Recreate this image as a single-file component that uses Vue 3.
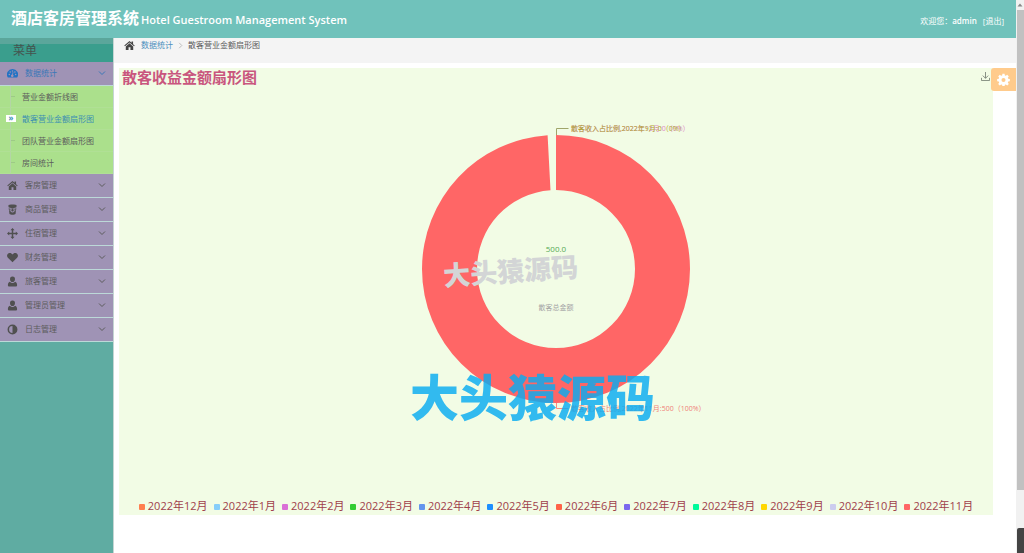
<script setup>
import { ref } from 'vue'

const subItems = ['营业金额折线图', '散客营业金额扇形图', '团队营业金额扇形图', '房间统计']
const activeSub = ref(1)

const menus = [
  { icon: 'home', label: '客房管理' },
  { icon: 'cup', label: '商品管理' },
  { icon: 'move', label: '住宿管理' },
  { icon: 'heart', label: '财务管理' },
  { icon: 'user', label: '旅客管理' },
  { icon: 'user', label: '管理员管理' },
  { icon: 'adjust', label: '日志管理' }
]

const icons = {
  home: 'M8 1.6 0.4 8l1 1.2L8 3.7l6.6 5.5 1-1.2-2.4-2V2h-2.2v2.1zM8 4.9 2.6 9.4V14.4h4V10.4h2.8v4h4V9.4z',
  cup: 'M2 2.2C2 .4 14 .4 14 2.2l-.3 2.600C13 6.200 3 6.200 2.300 4.800zM2.400 6c2 1.300 9.200 1.300 11.200 0l-.3 2.200h-2.200a3.200 3.200 0 0 0-6.200 0H2.700zM2.900 9.200h1.900a3.200 3.200 0 0 0 6.400 0h1.900l-.7 5.200c-1.500 1.500-7.300 1.500-8.800 0zM8 7.200a1.800 1.800 0 1 1 0 3.600 1.800 1.800 0 0 1 0-3.600z',
  move: 'M8 0l3 3.200H9.100v3.700h3.700V5L16 8l-3.200 3V9.100H9.100v3.700H11L8 16l-3-3.200h1.900V9.100H3.200V11L0 8l3.200-3v1.900h3.700V3.200H5z',
  heart: 'M8 15 1.300 8.500C-.6 6.500-.2 3.300 1.800 2 4 .6 6.800 1.400 8 3.600 9.200 1.400 12 .6 14.200 2c2 1.300 2.400 4.500.5 6.500z',
  user: 'M8 .8a3.600 3.600 0 0 1 3.600 3.800C11.600 7 10 8.900 8 8.900S4.400 7 4.400 4.600A3.600 3.600 0 0 1 8 .8zM4.200 8.200C5.300 9.400 6.600 10 8 10s2.700-.6 3.800-1.800c2 .6 2.900 2.700 2.900 5.200 0 1.200-.9 2-2 2H3.300c-1.100 0-2-.8-2-2 0-2.500.9-4.600 2.900-5.200z',
  adjust: 'M8 .8a7.200 7.200 0 1 1 0 14.400A7.200 7.200 0 0 1 8 .8zM8 3v10A5 5 0 0 1 8 3z'
}

const legend = [
  { name: '2022年12月', color: '#ff7f50' },
  { name: '2022年1月', color: '#87cefa' },
  { name: '2022年2月', color: '#da70d6' },
  { name: '2022年3月', color: '#32cd32' },
  { name: '2022年4月', color: '#6495ed' },
  { name: '2022年5月', color: '#1e90ff' },
  { name: '2022年6月', color: '#ff6347' },
  { name: '2022年7月', color: '#7b68ee' },
  { name: '2022年8月', color: '#00fa9a' },
  { name: '2022年9月', color: '#ffd700' },
  { name: '2022年10月', color: '#ccccee' },
  { name: '2022年11月', color: '#ff6666' }
]
</script>

<template>
  <div class="window">
    <div class="page">
      <header class="topbar">
        <h1><span>酒店客房管理系统</span><small>Hotel Guestroom Management System</small></h1>
        <div class="account">
          <span>欢迎您：</span><b>admin</b><a href="#">[退出]</a>
        </div>
      </header>

      <div class="body">
        <nav class="sidebar">
          <div class="menu-title">菜单</div>
          <button class="menu open" type="button">
            <svg class="icon" viewBox="0 0 16 16">
              <path d="M8 1.500a8 8 0 0 0-6.800 12.300h13.600A8 8 0 0 0 8 1.500z" />
              <g fill="#9f93b5">
                <circle cx="3.400" cy="9.500" r="1.100" />
                <circle cx="4.700" cy="5.900" r="1.100" />
                <circle cx="8" cy="4.400" r="1.100" />
                <circle cx="12.600" cy="9.500" r="1.100" />
                <circle cx="11.500" cy="5.900" r="1.100" />
                <path d="M9.300 6l-.6 3.700a1.900 1.900 0 1 1-1.200-.3L8.300 5.800z" />
              </g>
            </svg>
            <span>数据统计</span>
            <svg class="chevron" viewBox="0 0 8 8"><path d="M1 2.500l3 3 3-3" /></svg>
          </button>
          <ul class="submenu">
            <li v-for="(item, i) in subItems" :key="item" :class="{ active: i === activeSub }">
              <span class="mark">{{ i === activeSub ? '»' : '' }}</span>
              <a href="#" @click.prevent="activeSub = i">{{ item }}</a>
            </li>
          </ul>
          <button v-for="m in menus" :key="m.label" class="menu" type="button">
            <svg class="icon" viewBox="0 0 16 16"><path :d="icons[m.icon]" fill-rule="evenodd" /></svg>
            <span>{{ m.label }}</span>
            <svg class="chevron" viewBox="0 0 8 8"><path d="M1 2.500l3 3 3-3" /></svg>
          </button>
        </nav>

        <main class="content">
          <div class="crumbs">
            <svg class="crumb-home" viewBox="0 0 16 16"><path :d="icons.home" /></svg>
            <a href="#">数据统计</a>
            <svg class="sep" viewBox="0 0 8 8"><path d="M2.500 1l3 3-3 3" /></svg>
            <span>散客营业金额扇形图</span>
          </div>

          <section class="chart">
            <h2>散客收益金额扇形图</h2>
            <button class="save" type="button" aria-label="保存为图片">
              <svg viewBox="0 0 10 10"><path d="M5 0v7M2 4l3 3 3-3M.5 6.500v3h9v-3" /></svg>
            </button>
            <svg class="plot" viewBox="0 0 874 429">
              <path
                fill="#ff6666"
                d="M437 67A134 134 0 0 1 437 335A134 134 0 0 1 303 201A134 134 0 0 1 428.600 67.300L431.500 122.200A79 79 0 0 0 358 201A79 79 0 0 0 437 280A79 79 0 0 0 437 122z"
              />
              <path class="lead top" d="M437.500 67v-6.500h12" />
              <g class="label">
                <text x="452" y="63" fill="#dd88c8">散客收入占比例,2022年12月:0（0%）</text>
                <text x="452" y="63" fill="#b0aa30">散客收入占比例,2022年9月:0（0%）</text>
              </g>
              <text class="total" x="437" y="184">500.0</text>
              <text class="caption" x="437" y="242">散客总金额</text>
              <path class="lead bottom" d="M437.500 335v5.500h12" />
              <text class="label" x="452" y="343" fill="#f07f78">散客收入占比例,2022年11月:500（100%）</text>
              <text class="brand pale" x="325" y="218" transform="rotate(-4 325 218)">大头猿源码</text>
              <text class="brand vivid" x="291" y="348">大头猿源码</text>
            </svg>
            <div class="legend">
              <button v-for="l in legend" :key="l.name" type="button">
                <i :style="{ background: l.color }"></i>{{ l.name }}
              </button>
            </div>
          </section>

          <button class="settings" type="button" aria-label="设置">
            <svg viewBox="0 0 16 16">
              <path
                fill-rule="evenodd"
                d="M6.700 1h2.600l.4 2 1.200.5 1.700-1.200 1.900 1.900-1.200 1.700.5 1.200 2 .4v2.600l-2 .4-.5 1.200 1.200 1.700-1.900 1.900-1.700-1.200-1.200.5-.4 2H6.700l-.4-2-1.200-.5-1.700 1.200-1.900-1.900 1.200-1.700-.5-1.200-2-.4V7.500l2-.4.5-1.200-1.200-1.700 1.900-1.900 1.700 1.200 1.200-.5zM8 6.100a2.500 2.500 0 1 0 0 5 2.500 2.500 0 0 0 0-5z"
              />
            </svg>
          </button>
        </main>
      </div>
    </div>

    <div class="scrollbar" aria-hidden="true">
      <svg viewBox="0 0 8 10"><path d="M4 3.500l2.500 3h-5z" /></svg>
      <div class="thumb"></div>
      <div class="widget"></div>
    </div>
  </div>
</template>

<style>
body {
  margin: 0;
  background: #fff;
}
</style>

<style scoped>
.window {
  display: flex;
  min-height: 100vh;
  font: 8px/12px 'Open Sans', 'Noto Sans CJK SC', sans-serif;
  color: #5c5c5c;
}
.page {
  flex: 1;
  min-width: 0;
  display: flex;
  flex-direction: column;
}
button {
  border: 0;
  padding: 0;
  margin: 0;
  background: none;
  font: inherit;
  color: inherit;
  cursor: pointer;
}
a {
  color: inherit;
  text-decoration: none;
}

.topbar {
  display: flex;
  align-items: center;
  justify-content: space-between;
  height: 38px;
  padding: 0 12px 0 11px;
  background: #70c2bb;
  color: #fff;
}
h1 {
  display: flex;
  align-items: baseline;
  gap: 2px;
  margin: 0;
  font-size: 16px;
  line-height: 24px;
  font-weight: 700;
}
small {
  font-size: 11px;
  font-weight: 600;
}
.account {
  display: flex;
  padding-top: 3px;
}
.account b {
  font-weight: 600;
  margin-right: 6px;
}

.body {
  flex: 1;
  display: flex;
}
.sidebar {
  flex: none;
  width: 113px;
  border-right: 1px solid #c5d5d3;
  background: #5faca2;
}
.menu-title {
  box-sizing: border-box;
  height: 24px;
  padding-left: 13px;
  border-top: 6px solid #5ba69b;
  background: #3a9e8d;
  font-size: 12px;
  line-height: 14px;
  color: #45534f;
}
.menu {
  box-sizing: border-box;
  display: flex;
  align-items: center;
  width: 100%;
  height: 24px;
  padding: 0 7px 2px;
  border-bottom: 1px solid #bcd9d8;
  background: #9f93b5;
  text-align: left;
}
.menu.open {
  color: #3a78b8;
}
.icon {
  width: 11px;
  height: 11px;
  margin: 2px 7px 0 0;
  fill: #505050;
}
.open .icon {
  fill: #2273c4;
}
.chevron {
  width: 8px;
  height: 8px;
  margin-left: auto;
  fill: none;
  stroke: currentColor;
}
.submenu {
  margin: 0;
  padding: 0;
  list-style: none;
  background: linear-gradient(#b4d5a6, #b4d5a6) 10px 0 / 1px 100% no-repeat #abe08c;
}
.submenu li {
  box-sizing: border-box;
  display: flex;
  align-items: center;
  height: 22px;
  padding-left: 6px;
  border-bottom: 1px solid #b0e095;
}
.mark {
  width: 10px;
  height: 7px;
  margin-right: 6px;
  line-height: 6px;
  text-align: center;
  background: linear-gradient(#9dca86, #9dca86) 5px 3px / 4px 1px no-repeat;
}
.active {
  color: #3c8fb2;
}
.active .mark {
  background: #fff;
  font-weight: 700;
}

.content {
  flex: 1;
  min-width: 0;
  position: relative;
}
.crumbs {
  box-sizing: border-box;
  display: flex;
  align-items: center;
  height: 25px;
  padding: 0 10px 11px;
  background: #f4f4f4;
}
.crumbs a {
  color: #4c8fbd;
}
.crumb-home {
  width: 11px;
  height: 11px;
  margin-right: 6px;
  fill: #444;
}
.sep {
  width: 7px;
  height: 7px;
  margin: 0 4px;
  fill: none;
  stroke: #b5b5b5;
}

.chart {
  position: relative;
  margin: 5px 23px 0 5px;
  background: #f2fce5;
}
h2 {
  position: absolute;
  left: 3px;
  top: 0;
  margin: 0;
  font-size: 15px;
  line-height: 18px;
  font-weight: 700;
  color: #c9567e;
}
.save {
  position: absolute;
  right: 3px;
  top: 4px;
  width: 9px;
  height: 9px;
}
.save svg {
  display: block;
  fill: none;
  stroke: #7c8578;
}
.plot {
  display: block;
  width: 100%;
}
.lead {
  fill: none;
}
.top {
  stroke: #a0a56a;
}
.bottom {
  stroke: #ff8a80;
}
.label,
.caption {
  font-size: 7px;
}
.total {
  font-size: 8px;
  text-anchor: middle;
  fill: #55aa55;
}
.caption {
  text-anchor: middle;
  fill: #a5a5a5;
}
.brand {
  font-family: 'Noto Sans CJK SC', sans-serif;
  font-weight: 900;
}
.pale {
  font-size: 27px;
  fill: #d3d5d6;
}
.vivid {
  font-size: 49px;
  fill: #08acf2;
  opacity: 0.82;
}
.legend {
  display: flex;
  flex-wrap: wrap;
  justify-content: center;
  gap: 0 6px;
}
.legend button {
  display: flex;
  align-items: center;
  height: 18px;
  gap: 3px;
  font-size: 11px;
  color: #a0404a;
}
.legend i {
  width: 6px;
  height: 6px;
  margin-top: 2px;
  border-radius: 1px;
}

.settings {
  position: absolute;
  right: 0;
  top: 30px;
  width: 25px;
  height: 23px;
  border-radius: 3px 0 0 3px;
  background: #ffcb8c;
}
.settings svg {
  display: block;
  width: 13px;
  height: 13px;
  margin: auto;
  fill: #fff;
}

.scrollbar {
  flex: none;
  display: flex;
  flex-direction: column;
  width: 8px;
  background: #f1f1f1;
}
.scrollbar svg {
  width: 8px;
  height: 10px;
  fill: #888;
}
.thumb {
  flex: 1;
  margin-left: 1px;
  background: #c1c1c1;
}
.widget {
  height: 25px;
  margin: 38px 0 0 1px;
  border-radius: 2px 0 0 0;
  background: #444;
}
</style>
